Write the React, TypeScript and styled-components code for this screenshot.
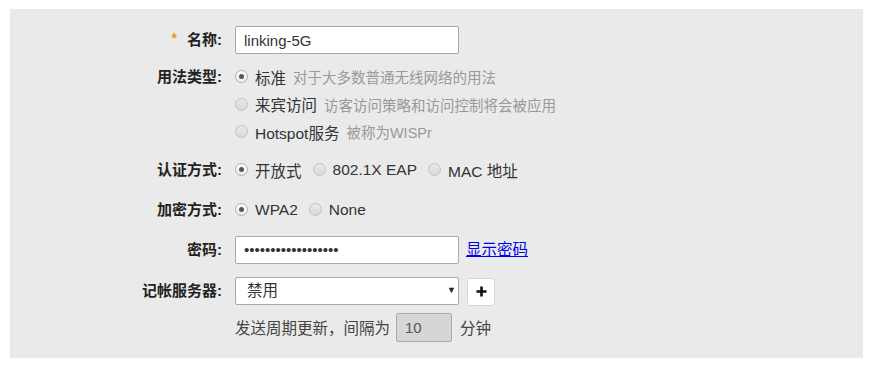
import styled, { createGlobalStyle } from "styled-components";

const GlobalStyle = createGlobalStyle`
  html, body {
    margin: 0;
    padding: 0;
    background: #ffffff;
  }
  body {
    font-family: "Liberation Sans", "Noto Sans CJK SC", sans-serif;
    font-size: 15px;
    color: #333;
  }
`;

const usageOptions = [
  { label: "标准", desc: "对于大多数普通无线网络的用法", checked: true },
  { label: "来宾访问", desc: "访客访问策略和访问控制将会被应用", checked: false },
  { label: "Hotspot服务", desc: "被称为WISPr", checked: false },
];

const App = () => {
  return (
    <>
      <GlobalStyle />
      <Page>
        <Panel>
          <Row>
            <Label>
              <Required>*</Required>名称:
            </Label>
            <TextInput defaultValue="linking-5G" />
          </Row>

          <Row $mt={9}>
            <Label $lh={27.5}>用法类型:</Label>
            <RadioStack>
              {usageOptions.map((opt) => (
                <RadioLine key={opt.label}>
                  <Radio type="radio" name="usage" defaultChecked={opt.checked} />
                  <RadioText>{opt.label}</RadioText>
                  <Desc>{opt.desc}</Desc>
                </RadioLine>
              ))}
            </RadioStack>
          </Row>

          <Row $mt={10.5}>
            <Label $lh={27}>认证方式:</Label>
            <RadioInline>
              <RadioItem>
                <Radio type="radio" name="auth" defaultChecked />
                <RadioText>开放式</RadioText>
              </RadioItem>
              <RadioItem>
                <Radio type="radio" name="auth" />
                <RadioText>802.1X EAP</RadioText>
              </RadioItem>
              <RadioItem>
                <Radio type="radio" name="auth" />
                <RadioText>MAC 地址</RadioText>
              </RadioItem>
            </RadioInline>
          </Row>

          <Row $mt={13}>
            <Label $lh={27}>加密方式:</Label>
            <RadioInline>
              <RadioItem>
                <Radio type="radio" name="enc" defaultChecked />
                <RadioText>WPA2</RadioText>
              </RadioItem>
              <RadioItem>
                <Radio type="radio" name="enc" />
                <RadioText>None</RadioText>
              </RadioItem>
            </RadioInline>
          </Row>

          <Row $mt={12.5}>
            <Label>密码:</Label>
            <TextInput type="password" defaultValue="linking5gpassword1" />
            <ShowLink href="#">显示密码</ShowLink>
          </Row>

          <Row $mt={13}>
            <Label>记帐服务器:</Label>
            <SelectWrap>
              <Select defaultValue="off">
                <option value="off">禁用</option>
              </Select>
              <Caret>▼</Caret>
            </SelectWrap>
            <AddButton type="button">
              <svg width="13" height="13" viewBox="0 0 13 13">
                <path d="M6.5 1.5v10M1.5 6.5h10" stroke="#111" strokeWidth="2.6" />
              </svg>
            </AddButton>
          </Row>

          <Row $mt={7}>
            <Label />
            <IntervalLine>
              发送周期更新，间隔为
              <IntervalInput defaultValue="10" disabled />
              分钟
            </IntervalLine>
          </Row>
        </Panel>
      </Page>
    </>
  );
};

export default App;

const Page = styled.div`
  padding: 9px 13px 14px 10px;
`;

const Panel = styled.div`
  background: #eaeaea;
  padding: 17px 0 16px 0;
  display: flex;
  flex-direction: column;
`;

const Row = styled.div<{ $mt?: number }>`
  display: flex;
  align-items: flex-start;
  margin-top: ${(p) => p.$mt ?? 0}px;
`;

const Label = styled.div<{ $lh?: number }>`
  width: 212px;
  flex: none;
  margin-right: 13px;
  text-align: right;
  font-weight: bold;
  color: #222;
  font-size: 15px;
  line-height: ${(p) => p.$lh ?? 28}px;
`;

const Required = styled.span`
  color: #f39800;
  font-weight: bold;
  font-size: 14px;
  margin-right: 10px;
  position: relative;
  top: -2px;
`;

const TextInput = styled.input`
  box-sizing: border-box;
  width: 224px;
  height: 28px;
  border: 1px solid #a9a9a9;
  border-radius: 2px;
  background: #fff;
  padding: 0 8px;
  font-family: "Liberation Sans", "Noto Sans CJK SC", sans-serif;
  font-size: 15px;
  color: #333;
  outline: none;
  margin: 0;
`;

const RadioStack = styled.div`
  display: flex;
  flex-direction: column;
`;

const RadioLine = styled.label`
  display: flex;
  align-items: center;
  height: 27.5px;
`;

const RadioInline = styled.div`
  display: flex;
  align-items: center;
  height: 27px;
  gap: 11px;
`;

const RadioItem = styled.label`
  display: flex;
  align-items: center;
`;

const Radio = styled.input`
  appearance: none;
  box-sizing: border-box;
  width: 13px;
  height: 13px;
  margin: 0 7px 0 0;
  border-radius: 50%;
  border: 1px solid #c2c2c2;
  background: linear-gradient(#e9e9e9, #d9d9d9);
  position: relative;
  flex: none;

  &:checked {
    background: linear-gradient(#fdfdfd, #ececec);
    border-color: #b0b0b0;
  }
  &:checked::after {
    content: "";
    position: absolute;
    left: 3px;
    top: 3px;
    width: 5px;
    height: 5px;
    border-radius: 50%;
    background: #555;
  }
`;

const RadioText = styled.span`
  font-size: 15.5px;
  color: #333;
`;

const Desc = styled.span`
  font-size: 14.5px;
  color: #999;
  margin-left: 7px;
`;

const ShowLink = styled.a`
  color: #0000ee;
  text-decoration: underline;
  font-size: 15.5px;
  line-height: 28px;
  margin-left: 7px;
`;

const SelectWrap = styled.div`
  position: relative;
  width: 224px;
  height: 28px;
`;

const Select = styled.select`
  appearance: none;
  box-sizing: border-box;
  width: 100%;
  height: 28px;
  border: 1px solid #a9a9a9;
  border-radius: 2px;
  background: #fff;
  padding: 0 0 0 11px;
  font-family: "Liberation Sans", "Noto Sans CJK SC", sans-serif;
  font-size: 15.5px;
  color: #333;
  margin: 0;
  outline: none;
`;

const Caret = styled.span`
  position: absolute;
  right: 3px;
  top: 8px;
  font-size: 9px;
  color: #222;
  pointer-events: none;
`;

const AddButton = styled.button`
  box-sizing: border-box;
  width: 28px;
  height: 28px;
  margin: 1px 0 0 8px;
  border: 1px solid #d6d6d6;
  border-radius: 3px;
  background: #fff;
  display: flex;
  align-items: center;
  justify-content: center;
  padding: 0;
`;

const IntervalLine = styled.div`
  display: flex;
  align-items: center;
  height: 29px;
  font-size: 15.5px;
  color: #444;
`;

const IntervalInput = styled.input`
  box-sizing: border-box;
  width: 56px;
  height: 29px;
  margin: 0 8px 0 6px;
  border: 1px solid #a9a9a9;
  border-radius: 2px;
  background: #d6d6d6;
  padding: 0 8px;
  font-family: "Liberation Sans", "Noto Sans CJK SC", sans-serif;
  font-size: 15px;
  color: #555;
  -webkit-text-fill-color: #555;
  opacity: 1;
`;
